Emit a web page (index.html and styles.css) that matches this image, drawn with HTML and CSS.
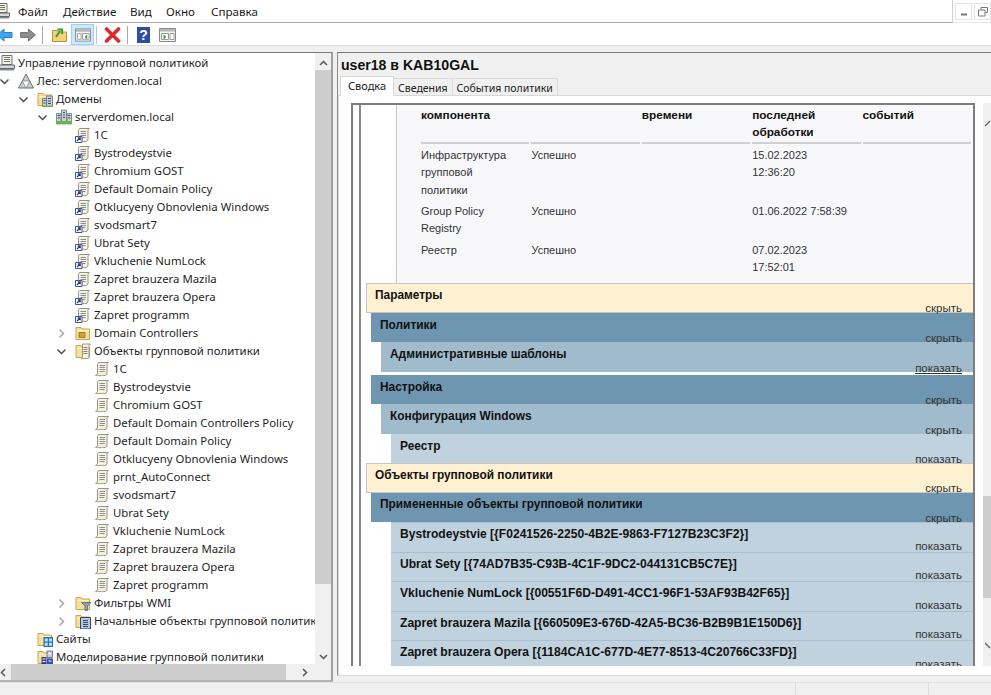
FILE: index.html
```html
<!DOCTYPE html>
<html lang="ru">
<head>
<meta charset="utf-8">
<title>Управление групповой политикой</title>
<link rel="stylesheet" href="styles.css">
</head>
<body>
<svg class="sprite" width="0" height="0" aria-hidden="true">
  <symbol id="scroll" viewBox="0 0 16 16">
    <path d="M5 1.500h9.500c-1 .5-1.500 1.200-1.500 2.200V12c0 1.500-1 2.500-2 2.500H1.500c1-.5 2-1.200 2-2.500V3.500c0-1 .5-2 1.500-2z" fill="#f6f2dc" stroke="#96937e"/>
    <path d="M5.500 4.500h5.500M5.500 6.500h5.500M5.500 8.500h5.500M5.500 10.500h5" stroke="#87909a"/>
    <path d="M1.500 14.500h8.500" stroke="#b4ae8c" stroke-width="1.200"/>
  </symbol>
  <symbol id="gpolink" viewBox="0 0 16 16">
    <use href="#scroll"/>
    <path d="M.5 9.500h6.500v6H.5z" fill="#fff" stroke="#49548f"/>
    <path d="M2 14l3-3M2.800 10.800h2.400v2.400" fill="none" stroke="#25338e" stroke-width="1.200"/>
  </symbol>
  <symbol id="tool" viewBox="0 0 16 16">
    <path d="M3 .5h10v9H3z" fill="#f4f2e4" stroke="#6f6f6f"/>
    <path d="M5 2.500h6M5 4.500h6M5 6.500h6" stroke="#777"/>
    <path d="M.5 10h15v3.500H.5z" fill="#d9d9d9" stroke="#666"/>
    <path d="M1 14h14v1.500H1z" fill="#7f8c98"/>
  </symbol>
  <symbol id="forest" viewBox="0 0 16 16">
    <path d="M8 1L15.500 15H.5z" fill="#c9ccd0" stroke="#6b6e71"/>
    <path d="M4.300 8h7.400L8 15z" fill="#fff" stroke="#85888b" stroke-width=".8"/>
  </symbol>
  <symbol id="folder" viewBox="0 0 16 16">
    <path d="M1 2.500h5l1 1.500h7.500v10.500H1z" fill="#f8e09a" stroke="#c9a752"/>
    <path d="M2 5.500h11.500" stroke="#fdf3cc"/>
  </symbol>
  <symbol id="building" viewBox="0 0 16 16">
    <path d="M.5 4.500h4.500V15H.5zM5.500 1h5v14h-5zM11 4.500h4.500V15H11z" fill="#c6d0d4" stroke="#6b7980" stroke-width=".8"/>
    <path d="M1.500 6.500h2.500M1.500 9h2.500M7 3.500h2M7 6h2M7 8.500h2M12 6.500h2.500M12 9h2.500" stroke="#40565f"/>
    <path d="M.5 12h15v3H.5z" fill="#6fb344"/>
  </symbol>
  <symbol id="domains" viewBox="0 0 16 16">
    <use href="#folder"/>
    <path d="M5.500 7.500h4V16h-4zM9.500 5h6v11h-6z" fill="#c8d0d4" stroke="#5f6e76" stroke-width=".8"/>
    <path d="M6.500 9.500h2M6.500 12h2M11 7.500h3M11 10h3M11 12.500h3" stroke="#3c505a"/>
    <path d="M5.500 14.500h10v1.500h-10z" fill="#6fb344"/>
  </symbol>
  <symbol id="ou" viewBox="0 0 16 16">
    <use href="#folder"/>
    <path d="M4 7.500h6v5H4z" fill="#c9a33c" stroke="#8c7226" stroke-width=".8"/>
  </symbol>
  <symbol id="gpofolder" viewBox="0 0 16 16">
    <use href="#folder"/>
    <path d="M7.500 1h8l-1.500 1.500V14c0 1-.5 1.500-1.500 1.500h-6c.5-.5 1-1 1-2z" fill="#f6f2dc" stroke="#85826c" stroke-width=".8"/>
    <path d="M8.500 4.500h4M8.500 6.500h4M8.500 8.500h4M8.500 10.500h4" stroke="#6d7680" stroke-width=".9"/>
  </symbol>
  <symbol id="wmi" viewBox="0 0 16 16">
    <use href="#folder"/>
    <path d="M6.500 7.500H16l-3.500 3.500v4.500h-2.500V11z" fill="#8ba3b5" stroke="#566876" stroke-width=".8"/>
  </symbol>
  <symbol id="starter" viewBox="0 0 16 16">
    <use href="#folder"/>
    <path d="M5.500 4.500H15.500V16H5.500z" fill="#b4c8de" stroke="#37465a"/>
    <path d="M8 7.500h5M8 9.500h5M8 11.500h5M8 13.500h5" stroke="#28497a"/>
  </symbol>
  <symbol id="sites" viewBox="0 0 16 16">
    <use href="#folder"/>
    <path d="M6.500 6H16v10H6.500z" fill="#1c75bc"/>
    <path d="M7.800 7.500h3v3h-3zM12 7.500h3v3h-3zM7.800 11.800h3v3h-3zM12 11.800h3v3h-3z" fill="#bfe0f5"/>
  </symbol>
  <symbol id="model" viewBox="0 0 16 16">
    <use href="#folder"/>
    <path d="M4.500 8h5v8h-5z" fill="#2b3f96"/>
    <path d="M10 2h5.500v6.500H10z" fill="#c7cbe4" stroke="#4f5a9a" stroke-width=".8"/>
    <path d="M10 9.500h6V16h-6z" fill="#3550b0"/>
    <path d="M5.500 10h3M5.500 12.500h3M11.500 4.500h2.500M11.500 12h3" stroke="#fff"/>
  </symbol>
  <symbol id="chev-down" viewBox="0 0 9 9"><path d="M.5 2.500l4 4 4-4" fill="none" stroke="#4d4d4d" stroke-width="1.500"/></symbol>
  <symbol id="chev-right" viewBox="0 0 9 9"><path d="M2.500.5l4 4-4 4" fill="none" stroke="#a6a6a6" stroke-width="1.500"/></symbol>
</svg>

<header class="menubar">
  <div class="menu-main">
    <svg class="menu-icon"><use href="#tool"/></svg>
    <nav class="menu-items">
      <span>Файл</span><span>Действие</span><span>Вид</span><span>Окно</span><span>Справка</span>
    </nav>
  </div>
  <div class="winbtns">
    <span class="winbtn"><svg width="8" height="8" viewBox="0 0 8 8"><path d="M1 6.500h6" stroke="#777" stroke-width="2"/></svg></span>
    <span class="winbtn"><svg width="10" height="10" viewBox="0 0 10 10"><path d="M3 2.500V.5h6.500v5H7.500M.5 3h6.500v6H.5z" fill="none" stroke="#777"/></svg></span>
  </div>
</header>

<div class="toolbar">
  <svg class="t-back" width="16" height="14" viewBox="0 0 16 14"><path d="M0 7l7-6v3.500h8v5H7V13z" fill="#3ea3e8" stroke="#2481c4"/></svg>
  <svg class="t-fwd" width="16" height="14" viewBox="0 0 16 14"><path d="M15.500 7l-7-6v3.500H.5v5h8V13z" fill="#8c8c8c" stroke="#777"/></svg>
  <i class="t-sep t-sep1"></i>
  <svg class="t-up" width="15" height="15" viewBox="0 0 15 15"><path d="M.5 3.500h5l1 1.500h8v9.500H.5z" fill="#f0d27a" stroke="#b79a3f"/><path d="M4 10l4-6M5.500 2.500H10V7" fill="none" stroke="#3d9b3a" stroke-width="2"/></svg>
  <span class="t-active"><svg width="16" height="14" viewBox="0 0 17 14"><path d="M.5.500h16v13H.5z" fill="#f4f4f4" stroke="#8a8a8a"/><path d="M1 1h15v2.500H1z" fill="#b5b5b5"/><path d="M2.500 5.500h4v6h-4zM8 5.500h7v6H8z" fill="#fff" stroke="#9c9c9c"/><path d="M13 6.500l-3 2.500 3 2.500z" fill="#3aa04a"/></svg></span>
  <i class="t-sep t-sep2"></i>
  <svg class="t-x" width="17" height="16" viewBox="0 0 17 16"><path d="M2.500 2l12 12M14.500 2l-12 12" stroke="#d92b2b" stroke-width="3.600" stroke-linecap="round"/></svg>
  <i class="t-sep t-sep3"></i>
  <span class="t-help">?</span>
  <svg class="t-panel" width="17" height="14" viewBox="0 0 17 14"><path d="M.5.500h16v13H.5z" fill="#f4f4f4" stroke="#8a8a8a"/><path d="M1 1h15v2.500H1z" fill="#b5b5b5"/><path d="M2.500 5.500h7v6h-7zM11 5.500h4v6h-4z" fill="#fff" stroke="#9c9c9c"/><path d="M4.500 6.500l3 2.500-3 2.500z" fill="#3aa04a"/></svg>
</div>

<main class="workspace">
  <section class="tree-pane">
    <div class="tree-area">
      <ul class="tree">
        <li class="node l0"><svg class="ico"><use href="#tool"/></svg><span>Управление групповой политикой</span></li>
        <li class="node l1"><svg class="chev"><use href="#chev-down"/></svg><svg class="ico"><use href="#forest"/></svg><span>Лес: serverdomen.local</span></li>
        <li class="node l2"><svg class="chev"><use href="#chev-down"/></svg><svg class="ico"><use href="#domains"/></svg><span>Домены</span></li>
        <li class="node l3"><svg class="chev"><use href="#chev-down"/></svg><svg class="ico"><use href="#building"/></svg><span>serverdomen.local</span></li>
        <li class="node l4"><i class="chev"></i><svg class="ico"><use href="#gpolink"/></svg><span>1C</span></li>
        <li class="node l4"><i class="chev"></i><svg class="ico"><use href="#gpolink"/></svg><span>Bystrodeystvie</span></li>
        <li class="node l4"><i class="chev"></i><svg class="ico"><use href="#gpolink"/></svg><span>Chromium GOST</span></li>
        <li class="node l4"><i class="chev"></i><svg class="ico"><use href="#gpolink"/></svg><span>Default Domain Policy</span></li>
        <li class="node l4"><i class="chev"></i><svg class="ico"><use href="#gpolink"/></svg><span>Otklucyeny Obnovlenia Windows</span></li>
        <li class="node l4"><i class="chev"></i><svg class="ico"><use href="#gpolink"/></svg><span>svodsmart7</span></li>
        <li class="node l4"><i class="chev"></i><svg class="ico"><use href="#gpolink"/></svg><span>Ubrat Sety</span></li>
        <li class="node l4"><i class="chev"></i><svg class="ico"><use href="#gpolink"/></svg><span>Vkluchenie NumLock</span></li>
        <li class="node l4"><i class="chev"></i><svg class="ico"><use href="#gpolink"/></svg><span>Zapret brauzera Mazila</span></li>
        <li class="node l4"><i class="chev"></i><svg class="ico"><use href="#gpolink"/></svg><span>Zapret brauzera Opera</span></li>
        <li class="node l4"><i class="chev"></i><svg class="ico"><use href="#gpolink"/></svg><span>Zapret programm</span></li>
        <li class="node l4"><svg class="chev"><use href="#chev-right"/></svg><svg class="ico"><use href="#ou"/></svg><span>Domain Controllers</span></li>
        <li class="node l4"><svg class="chev"><use href="#chev-down"/></svg><svg class="ico"><use href="#gpofolder"/></svg><span>Объекты групповой политики</span></li>
        <li class="node l5"><i class="chev"></i><svg class="ico"><use href="#scroll"/></svg><span>1C</span></li>
        <li class="node l5"><i class="chev"></i><svg class="ico"><use href="#scroll"/></svg><span>Bystrodeystvie</span></li>
        <li class="node l5"><i class="chev"></i><svg class="ico"><use href="#scroll"/></svg><span>Chromium GOST</span></li>
        <li class="node l5"><i class="chev"></i><svg class="ico"><use href="#scroll"/></svg><span>Default Domain Controllers Policy</span></li>
        <li class="node l5"><i class="chev"></i><svg class="ico"><use href="#scroll"/></svg><span>Default Domain Policy</span></li>
        <li class="node l5"><i class="chev"></i><svg class="ico"><use href="#scroll"/></svg><span>Otklucyeny Obnovlenia Windows</span></li>
        <li class="node l5"><i class="chev"></i><svg class="ico"><use href="#scroll"/></svg><span>prnt_AutoConnect</span></li>
        <li class="node l5"><i class="chev"></i><svg class="ico"><use href="#scroll"/></svg><span>svodsmart7</span></li>
        <li class="node l5"><i class="chev"></i><svg class="ico"><use href="#scroll"/></svg><span>Ubrat Sety</span></li>
        <li class="node l5"><i class="chev"></i><svg class="ico"><use href="#scroll"/></svg><span>Vkluchenie NumLock</span></li>
        <li class="node l5"><i class="chev"></i><svg class="ico"><use href="#scroll"/></svg><span>Zapret brauzera Mazila</span></li>
        <li class="node l5"><i class="chev"></i><svg class="ico"><use href="#scroll"/></svg><span>Zapret brauzera Opera</span></li>
        <li class="node l5"><i class="chev"></i><svg class="ico"><use href="#scroll"/></svg><span>Zapret programm</span></li>
        <li class="node l4"><svg class="chev"><use href="#chev-right"/></svg><svg class="ico"><use href="#wmi"/></svg><span>Фильтры WMI</span></li>
        <li class="node l4"><svg class="chev"><use href="#chev-right"/></svg><svg class="ico"><use href="#starter"/></svg><span>Начальные объекты групповой политики</span></li>
        <li class="node l2"><i class="chev"></i><svg class="ico"><use href="#sites"/></svg><span>Сайты</span></li>
        <li class="node l2"><i class="chev"></i><svg class="ico"><use href="#model"/></svg><span>Моделирование групповой политики</span></li>
      </ul>
      <div class="vscroll">
        <svg class="sb-arrow" width="9" height="6" viewBox="0 0 9 6"><path d="M1 5l3.500-3.500L8 5" fill="none" stroke="#555" stroke-width="1.500"/></svg>
        <div class="vtrack"><div class="vthumb"></div></div>
        <svg class="sb-arrow" width="9" height="6" viewBox="0 0 9 6"><path d="M1 1l3.500 3.500L8 1" fill="none" stroke="#555" stroke-width="1.500"/></svg>
      </div>
    </div>
    <div class="hscroll">
      <svg width="6" height="9" viewBox="0 0 6 9"><path d="M5 1L1.500 4.500 5 8" fill="none" stroke="#555" stroke-width="1.500"/></svg>
      <div class="hthumb"></div>
      <svg width="6" height="9" viewBox="0 0 6 9"><path d="M1 1l3.500 3.500L1 8" fill="none" stroke="#555" stroke-width="1.500"/></svg>
    </div>
  </section>

  <section class="detail-pane">
    <h1 class="detail-title">user18 в KAB10GAL</h1>
    <div class="tabs">
      <span class="tab active">Сводка</span><span class="tab">Сведения</span><span class="tab">События политики</span>
    </div>
    <div class="tab-page">
      <div class="report-row">
        <div class="frame">
          <div class="report">
            <div class="summary">
              <table class="comp-table">
                <thead>
                  <tr><th>компонента</th><th></th><th>времени</th><th>последней обработки</th><th>событий</th></tr>
                </thead>
                <tbody>
                  <tr><td>Инфраструктура групповой политики</td><td>Успешно</td><td></td><td>15.02.2023 12:36:20</td><td></td></tr>
                  <tr><td>Group Policy Registry</td><td>Успешно</td><td></td><td>01.06.2022 7:58:39</td><td></td></tr>
                  <tr><td>Реестр</td><td>Успешно</td><td></td><td>07.02.2023 17:52:01</td><td></td></tr>
                </tbody>
              </table>
            </div>
            <div class="sec cream"><b>Параметры</b><a>скрыть</a></div>
            <div class="sec blue1"><b>Политики</b><a>скрыть</a></div>
            <div class="sec blue2"><b>Административные шаблоны</b><a class="ul">показать</a></div>
            <div class="sec blue1 after-gap"><b>Настройка</b><a>скрыть</a></div>
            <div class="sec blue2"><b>Конфигурация Windows</b><a>скрыть</a></div>
            <div class="sec blue3"><b>Реестр</b><a>показать</a></div>
            <div class="sec cream"><b>Объекты групповой политики</b><a>скрыть</a></div>
            <div class="sec blue1 applied"><b>Примененные объекты групповой политики</b><a>скрыть</a></div>
            <div class="sec blue3 item"><b>Bystrodeystvie [{F0241526-2250-4B2E-9863-F7127B23C3F2}]</b><a>показать</a></div>
            <div class="sec blue3 item"><b>Ubrat Sety [{74AD7B35-C93B-4C1F-9DC2-044131CB5C7E}]</b><a>показать</a></div>
            <div class="sec blue3 item"><b>Vkluchenie NumLock [{00551F6D-D491-4CC1-96F1-53AF93B42F65}]</b><a>показать</a></div>
            <div class="sec blue3 item"><b>Zapret brauzera Mazila [{660509E3-676D-42A5-BC36-B2B9B1E150D6}]</b><a>показать</a></div>
            <div class="sec blue3 item"><b>Zapret brauzera Opera [{1184CA1C-677D-4E77-8513-4C20766C33FD}]</b><a>показать</a></div>
          </div>
        </div>
        <div class="report-scroll">
          <svg class="rs-arrow" width="6" height="10" viewBox="0 0 6 10"><path d="M0 7l5-5" fill="none" stroke="#666" stroke-width="1.500"/></svg>
          <div class="rs-track"><div class="rs-thumb"></div></div>
          <svg class="rs-arrow" width="6" height="10" viewBox="0 0 6 10"><path d="M0 3l5 5" fill="none" stroke="#666" stroke-width="1.500"/></svg>
        </div>
      </div>
    </div>
  </section>
</main>

<footer class="statusbar">
  <div class="status-cell first"></div><div class="status-cell mid"></div><div class="status-cell last"></div>
</footer>
</body>
</html>
```

FILE: styles.css
```css
* { box-sizing: border-box; }
html, body { margin: 0; height: 100%; }
body {
  width: 991px; height: 695px; overflow: hidden;
  display: flex; flex-direction: column;
  background: #f0f0f0; color: #1a1a1a;
  font-family: "Noto Sans", "Open Sans", sans-serif; font-size: 11.400px;
}
.sprite { position: absolute; }

.menubar { height: 23px; display: flex; background: #fff; flex: none; }
.menu-main {
  width: 958px; display: flex; align-items: center;
  border-bottom: 1px solid #ababab; border-right: 1px solid #d0d0d0;
}
.menu-icon { width: 16px; height: 16px; margin-left: -6px; }
.menu-items { display: flex; margin-left: 8px; font-size: 11.600px; }
.menu-items span:nth-child(1) { width: 45px; }
.menu-items span:nth-child(2) { width: 67px; }
.menu-items span:nth-child(3) { width: 36px; }
.menu-items span:nth-child(4) { width: 45px; }
.winbtns { flex: 1; display: flex; gap: 2px; padding: 3px 0 0 2px; border-bottom: 1px solid #e8e8e8; }
.winbtn {
  width: 17px; height: 17px; flex: none; display: flex; align-items: center; justify-content: center;
  border: 1px solid #e4e4e4;
}

.toolbar {
  height: 23px; flex: none; display: flex; align-items: center;
  background: #fff; border-bottom: 1px solid #dcdcdc; padding-top: 1px;
}
.toolbar svg { flex: none; }
.t-back { margin-left: -3px; }
.t-fwd { margin-left: 7px; }
.t-sep { width: 1px; height: 18px; background: #a8a8a8; flex: none; }
.t-sep1 { margin: 0 9px 0 6px; }
.t-active {
  width: 23px; height: 21px; margin-left: 4px; flex: none;
  display: flex; align-items: center; justify-content: center;
  background: #cce8ff; border: 1px solid #99d1ff;
}
.t-sep2 { margin: 0 7px 0 2px; background: #c4c4c4; }
.t-sep3 { margin: 0 9px 0 6px; }
.t-help {
  width: 13px; height: 16px; flex: none; display: flex; align-items: center; justify-content: center;
  background: #2b4fa3; color: #fff; font: bold 14px "Liberation Sans", sans-serif;
}
.t-panel { margin-left: 9px; }

.workspace {
  height: 636px; flex: none; display: flex; align-items: flex-start; gap: 4px;
  background: #f0f0f0; padding-top: 6px;
}

.tree-pane {
  width: 333px; height: 630px; flex: none; display: flex; flex-direction: column;
  background: #fff; border-top: 1px solid #7a7a7a;
  border-right: 2px solid #a0a0a0; border-bottom: 2px solid #b4b4b4;
}
.tree-area { height: 611px; flex: none; display: flex; overflow: hidden; }
.tree { list-style: none; margin: 0; padding: 1px 0 0; width: 315px; overflow: hidden; flex: none; }
.node { height: 18px; display: flex; align-items: center; white-space: nowrap; color: #1f1f1f; }
.node span { line-height: 18px; }
.node.l1 { padding-left: 0; }
.node.l2 { padding-left: 19px; }
.node.l3 { padding-left: 38px; }
.node.l4 { padding-left: 57px; }
.node.l5 { padding-left: 76px; }
.chev { width: 9px; height: 9px; flex: none; display: block; margin-right: 9px; }
.ico { width: 16px; height: 16px; flex: none; margin-right: 3px; }
.l0 .ico { margin-left: -1px; }

.vscroll { width: 16px; flex: none; background: #f0f0f0; display: flex; flex-direction: column; align-items: center; }
.sb-arrow { flex: none; margin: 7px 0 4px; }
.vtrack { flex: 1; width: 100%; }
.vthumb { height: 514px; background: #cdcdcd; }

.hscroll { height: 16px; flex: none; background: #f0f0f0; display: flex; align-items: center; width: 331px; }
.hscroll svg { flex: none; margin: 0 4px 0 0; }
.hscroll svg:last-child { margin-left: 16px; }
.hthumb { width: 275px; margin-left: 1px; height: 16px; background: #cdcdcd; }

.detail-pane {
  flex: 1; height: 624px; min-width: 0; display: flex; flex-direction: column;
  border-top: 1px solid #7a7a7a; border-left: 1px solid #8c8c8c;
  border-bottom: 1px solid #dcdcdc;
  background: #f0f0f0;
}
.detail-title {
  margin: 0; height: 23px; padding: 3px 0 0 3px;
  font: bold 14.100px/18px "Liberation Sans", sans-serif; color: #111;
  flex: none;
}
.tabs { height: 20px; flex: none; display: flex; padding-left: 2px; align-items: flex-end; }
.tab {
  height: 18px; padding: 0 4px; line-height: 18px; font-size: 10.500px;
  background: #f0f0f0; border: 1px solid #d9d9d9; border-bottom: 0; margin-left: -1px; color: #222;
}
.tab.active { height: 20px; padding: 0 7px; background: #fff; margin-left: 0; line-height: 17px; position: relative; z-index: 1; font-size: 11px; }
.tab-page {
  flex: 1; min-height: 0; background: #fff; border-top: 1px solid #d9d9d9;
  padding: 7px 0 9px 12px;
  border-left: 1px solid #d9d9d9; margin-top: -1px;
}
.report-row { height: 100%; display: flex; }
.frame {
  width: 624px; flex: none; overflow: hidden; background: #fff;
  border: 2px solid #7d7d7d; border-bottom: 0;
}
.report {
  margin-left: 6px; padding-left: 5px; border-left: 2px solid #8a8a8a; height: 100%;
  font-family: "Liberation Sans", sans-serif; font-size: 11px; overflow: hidden;
}
.report-scroll {
  flex: 1; background: #f0f0f0; display: flex; flex-direction: column; align-items: flex-end; margin-left: 8px;
}
.rs-arrow { flex: none; }
.rs-arrow:first-child { margin-top: 16px; }
.rs-arrow:last-child { margin-bottom: 16px; }
.rs-track { flex: 1; width: 100%; padding-top: 367px; }
.rs-thumb { height: 102px; background: #cdcdcd; }

.summary {
  margin-left: 30px; height: 178px; background: #f8f8fb; border-left: 1px solid #c8c8c8;
  padding-left: 24px;
}
.comp-table { border-collapse: separate; border-spacing: 2px 0; width: 554px; table-layout: fixed; margin-left: -2px; }
.comp-table th, .comp-table td {
  text-align: left; vertical-align: top; line-height: 17.400px; padding: 0 24px 0 0;
}
.comp-table th { font-size: 11.800px; font-weight: bold; height: 33px; border-bottom: 2px solid #d0d0d0; padding-top: 2px; color: #111; }
.comp-table td { font-size: 11px; color: #333; padding-top: 3px; }
.comp-table td:nth-child(1) { padding-right: 10px; }
.comp-table td:nth-child(4) { padding-right: 12px; }
.comp-table th:nth-child(4) { padding-right: 30px; }
.comp-table tbody tr:nth-child(1) { height: 56px; }
.comp-table tbody tr:nth-child(2) { height: 39px; }

.sec {
  display: flex; justify-content: space-between; height: 29px;
  padding: 5px 11px 0 9px; color: #111;
}
.sec b { font-size: 11.900px; line-height: 14px; }
.sec a { align-self: flex-end; color: #333; font-size: 11.500px; line-height: 12px; margin-bottom: -1.500px; }
.sec a.ul { text-decoration: underline; }
.cream { background: #fff1d2; height: 30px; border: 1px solid #c5c5c5; border-right: 0; padding-top: 4px; padding-left: 8px; }
.blue1 { background: #6f96b0; margin-left: 5px; }
.blue2 { background: #a0bbcc; margin-left: 15px; height: 30px; }
.blue3 { background: #c0d2de; margin-left: 25px; }
.after-gap { margin-top: 3px; }
.applied { padding-top: 4px; }
.item { border-top: 1px solid #a9bfce; height: 29.500px; padding-top: 4px; }
.item b { font-size: 12.100px; }
.item a { margin-bottom: 0; }

.statusbar { height: 13px; flex: none; display: flex; background: #f0f0f0; border-top: 1px solid #e2e2e2; }
.status-cell { height: 100%; border-right: 1px solid #dcdcdc; }
.status-cell.first { width: 796px; }
.status-cell.mid { width: 133px; }
.status-cell.last { flex: 1; border-right: 0; }
```
